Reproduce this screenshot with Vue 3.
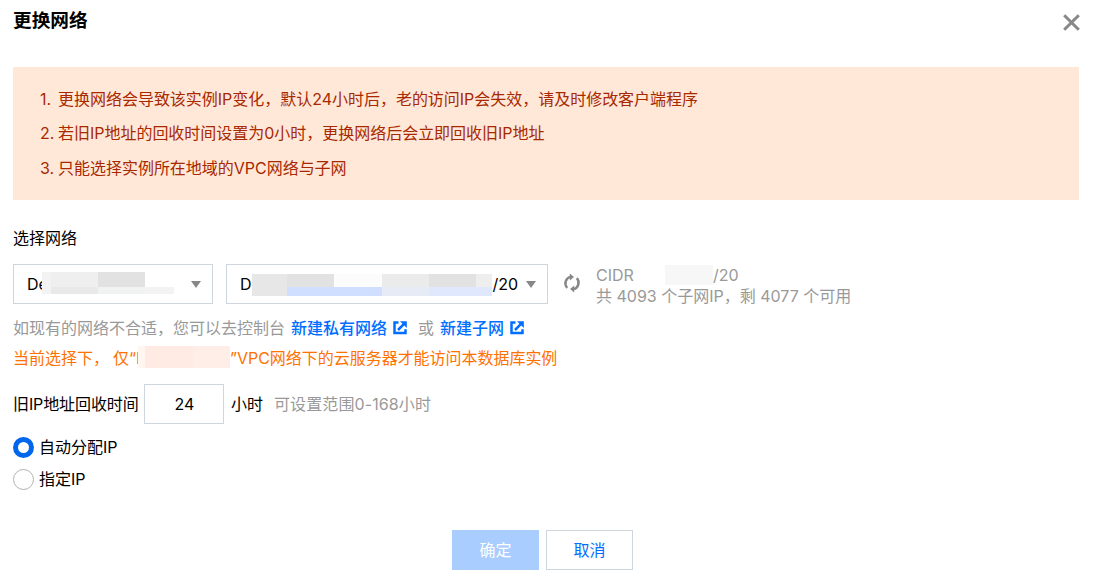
<template>
    <div class="dialog">
        <header class="dialog-header">
            <h3>更换网络</h3>
            <button class="close-button" aria-label="关闭">
                <svg width="17" height="17" viewBox="0 0 17 17" fill="none" stroke="#888" stroke-width="3">
                    <path d="M1.2 1.2L15.8 15.8M15.8 1.2L1.2 15.8" />
                </svg>
            </button>
        </header>

        <ol class="alert">
            <li v-for="(tip, index) in tips" :key="index">
                <span class="alert-index">{{ index + 1 }}.</span>
                <span>{{ tip }}</span>
            </li>
        </ol>

        <div class="field-label">选择网络</div>

        <div class="network-row">
            <div class="select select-vpc">
                <span class="select-text">De</span>
                <svg class="mask" width="132" height="22">
                    <rect v-for="(m, i) in vpcMask" :key="i" :x="m[0]" :y="m[1]" :width="m[2]" :height="m[3]" :fill="m[4]" />
                </svg>
                <i class="arrow"></i>
            </div>
            <div class="select select-subnet">
                <span class="select-text">D</span>
                <svg class="mask" width="240" height="22">
                    <rect v-for="(m, i) in subnetMask" :key="i" :x="m[0]" :y="m[1]" :width="m[2]" :height="m[3]" :fill="m[4]" />
                </svg>
                <span class="select-suffix">0/20</span>
                <i class="arrow"></i>
            </div>
            <svg class="refresh" width="18" height="20" viewBox="0 0 18 20">
                <g fill="none" stroke="#888" stroke-width="2.5">
                    <path d="M4.2 14.8A6.6 6.6 0 0 1 7.4 3.9" />
                    <path d="M13.8 5.2A6.6 6.6 0 0 1 10.6 16.1" />
                </g>
                <path d="M6.8 0.4L11 3.9L6.8 7.4ZM11.2 12.6L7 16.1L11.2 19.6Z" fill="#888" />
            </svg>
            <div class="cidr">
                <div class="cidr-line">
                    <span class="cidr-name">CIDR</span>
                    <span class="cidr-mask"></span>
                    <span class="cidr-value">0/20</span>
                </div>
                <div class="cidr-line cidr-count">共 4093 个子网IP，剩 4077 个可用</div>
            </div>
        </div>

        <div class="hint">
            <span class="hint-text">如现有的网络不合适，您可以去控制台</span>
            <a class="link link-vpc">新建私有网络
                <svg width="14" height="14" viewBox="0 0 14 14" fill="none" stroke="#006eff" stroke-width="2.5">
                    <path d="M5.5 1.5H1.5V12H12.5V8.2M5 9L10.8 3.2" />
                    <path d="M7 0.2H13.8V7Z" fill="#006eff" stroke="none" />
                </svg>
            </a>
            <span class="hint-or">或</span>
            <a class="link">新建子网
                <svg width="14" height="14" viewBox="0 0 14 14" fill="none" stroke="#006eff" stroke-width="2.5">
                    <path d="M5.5 1.5H1.5V12H12.5V8.2M5 9L10.8 3.2" />
                    <path d="M7 0.2H13.8V7Z" fill="#006eff" stroke="none" />
                </svg>
            </a>
        </div>

        <div class="warning">
            <span class="warning-start">当前选择下，</span>
            <span class="warning-only">仅“D</span>
            <span class="warning-mask"><i></i><i></i><i></i></span>
            <span class="warning-end">”VPC网络下的云服务器才能访问本数据库实例</span>
        </div>

        <div class="recycle-row">
            <label class="recycle-label">旧IP地址回收时间</label>
            <input v-model="hours" class="hours-input" type="text">
            <span class="hours-unit">小时</span>
            <span class="hours-range">可设置范围0-168小时</span>
        </div>

        <div class="radio-group">
            <label v-for="item in ipModes" :key="item.value" class="radio" @click="ipMode = item.value">
                <i class="radio-dot" :class="{ checked: ipMode === item.value }"></i>
                <span>{{ item.label }}</span>
            </label>
        </div>

        <footer class="dialog-footer">
            <button class="btn btn-primary" disabled>确定</button>
            <button class="btn">取消</button>
        </footer>
    </div>
</template>

<script setup>
import { ref } from 'vue'

const tips = [
    '更换网络会导致该实例IP变化，默认24小时后，老的访问IP会失效，请及时修改客户端程序',
    '若旧IP地址的回收时间设置为0小时，更换网络后会立即回收旧IP地址',
    '只能选择实例所在地域的VPC网络与子网',
]

const ipModes = [
    { value: 'auto', label: '自动分配IP' },
    { value: 'manual', label: '指定IP' },
]

const hours = ref('24')
const ipMode = ref('auto')

// masked blocks: x, y, width, height, color
const vpcMask = [
    [0, 0, 9, 22, '#f3f3f3'],
    [9, 0, 47, 15, '#efefef'],
    [56, 0, 47, 15, '#e2e2e2'],
    [9, 15, 47, 7, '#e9e9e9'],
    [56, 15, 47, 7, '#f1f2f2'],
    [103, 15, 29, 7, '#f3f3f3'],
]

const subnetMask = [
    [0, 0, 35, 22, '#e7e7e7'],
    [35, 0, 47, 13, '#e2e2e2'],
    [82, 0, 48, 13, '#fcfcfc'],
    [130, 0, 47, 13, '#ebebeb'],
    [177, 0, 47, 13, '#e2e2e2'],
    [224, 0, 16, 13, '#eee'],
    [35, 13, 95, 9, '#d0dfff'],
    [130, 13, 47, 9, '#e7ebf6'],
    [177, 13, 63, 9, '#dfe8fc'],
]
</script>

<style>
body {
    margin: 0;
    background: #fff;
}
</style>

<style scoped>
.dialog {
    box-sizing: border-box;
    width: 1102px;
    height: 588px;
    padding: 0 23px 0 13px;
    overflow: hidden;
    background: #fff;
    color: #000;
    font-family: Inter, "Noto Sans CJK SC", sans-serif;
    font-size: 16px;
    line-height: 30px;
    white-space: nowrap;
}

.dialog-header {
    display: flex;
    justify-content: space-between;
    align-items: flex-start;
    height: 67px;
}

h3 {
    margin: 6px 0 0;
    font-size: 18.67px;
    font-weight: 700;
    line-height: 30px;
}

.close-button {
    display: flex;
    margin-top: 14px;
    margin-right: -1px;
    padding: 0;
    border: none;
    background: none;
    cursor: pointer;
}

.alert {
    box-sizing: border-box;
    height: 133px;
    margin: 0;
    padding: 15px 27px;
    background: #ffe8d8;
    color: #a82800;
    list-style: none;
    line-height: 34.4px;
    letter-spacing: -0.02px;
}

.alert li {
    display: flex;
}

.alert-index {
    width: 18px;
}

.field-label {
    margin-top: 23px;
    height: 41px;
}

.network-row {
    display: flex;
    height: 40px;
}

.select {
    position: relative;
    box-sizing: border-box;
    display: flex;
    align-items: center;
    justify-content: space-between;
    height: 40px;
    padding: 0 11px 0 13px;
    border: 1px solid #cfd5de;
}

.select-vpc {
    width: 200px;
}

.select-subnet {
    width: 322px;
    margin-left: 13px;
}

.mask {
    position: absolute;
    top: 7px;
    left: 28px;
}

.select-subnet .mask {
    top: 9px;
    left: 25px;
}

.select-suffix {
    margin-left: auto;
    margin-right: 8px;
}

.arrow {
    width: 0;
    height: 0;
    border: 5.5px solid transparent;
    border-top: 7px solid #888;
    border-bottom: none;
}

.refresh {
    margin: 9px 0 0 15px;
}

.cidr {
    margin-top: 1px;
    margin-left: 15px;
    color: #999;
    line-height: 21px;
}

.cidr-line {
    display: flex;
    height: 21px;
}

.cidr-name {
    width: 69px;
}

.cidr-mask {
    position: relative;
    width: 48px;
    height: 20px;
    background: #f7f7f7;
}

.cidr-value {
    margin-left: -10px;
}

.hint {
    display: flex;
    margin-top: 9px;
    height: 30px;
    color: #999;
}

.hint-text {
    width: 278px;
}

.link {
    display: flex;
    align-items: center;
    gap: 6px;
    color: #006eff;
    font-weight: 500;
    cursor: pointer;
}

.link-vpc {
    width: 127px;
}

.hint-or {
    width: 22px;
}

.warning {
    display: flex;
    height: 30px;
    color: #ff7200;
}

.warning-start {
    width: 100px;
}

.warning-only {
    width: 25px;
}

.warning-mask {
    position: relative;
    display: flex;
    height: 22px;
    margin-top: 3px;
}

.warning-mask i {
    width: 7px;
    background: #fff5f1;
}

.warning-mask i:nth-child(2) {
    width: 48px;
    background: #ffebe3;
}

.warning-mask i:nth-child(3) {
    width: 37px;
    background: #ffeee7;
}

.warning-end {
    letter-spacing: -0.03px;
}

.recycle-row {
    display: flex;
    align-items: center;
    height: 40px;
    margin-top: 11px;
}

.recycle-label {
    width: 131px;
    letter-spacing: -0.1px;
}

.hours-input {
    box-sizing: border-box;
    width: 80px;
    height: 40px;
    padding: 0 0 0 1px;
    border: 1px solid #cfd5de;
    border-radius: 0;
    outline: none;
    color: #000;
    font: inherit;
    text-align: center;
}

.hours-unit {
    width: 43px;
    margin-left: 7px;
}

.hours-range {
    color: #999;
    letter-spacing: 0.1px;
}

.radio-group {
    margin-top: 7px;
    height: 99px;
}

.radio {
    display: flex;
    align-items: center;
    height: 32px;
    cursor: pointer;
}

.radio-dot {
    box-sizing: border-box;
    width: 21px;
    height: 21px;
    margin-right: 5px;
    border: 1px solid #b2b2b2;
    border-radius: 50%;
    background: #fff;
}

.radio-dot.checked {
    border: 5px solid #0067ed;
}

.dialog-footer {
    display: flex;
    gap: 7px;
    padding-left: 439px;
}

.btn {
    width: 87px;
    height: 40px;
    padding: 0;
    border: 1px solid #cfd5de;
    background: #fff;
    color: #006eff;
    font: inherit;
    cursor: pointer;
}

.btn-primary {
    border-color: #a9cdff;
    background: #a9cdff;
    color: #fff;
}
</style>
